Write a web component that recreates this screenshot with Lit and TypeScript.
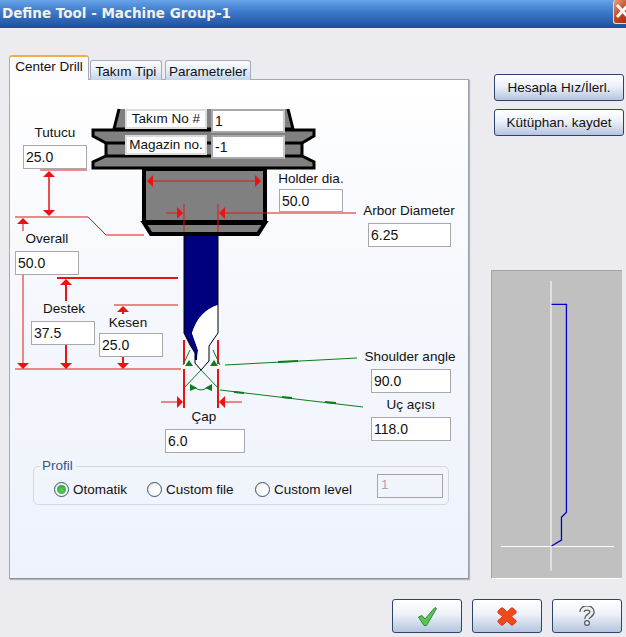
import { LitElement, html, svg, css } from 'lit'
import { customElement } from 'lit/decorators.js'

// all coordinates below are in window pixels, the canvas starts at 10,80
const OX = 10
const OY = 80

const FIELDS: [number, number, number, number, string][] = [
  [23, 145, 64, 24, '25.0'],
  [279, 189, 64, 23, '50.0'],
  [368, 223, 83, 24, '6.25'],
  [15, 251, 64, 24, '50.0'],
  [31, 321, 64, 24, '37.5'],
  [99, 333, 64, 24, '25.0'],
  [165, 429, 80, 24, '6.0'],
  [371, 369, 80, 24, '90.0'],
  [371, 417, 80, 24, '118.0'],
]

const LABELS: [string, number, number][] = [
  ['Tutucu', 55, 133],
  ['Holder dia.', 311, 179],
  ['Arbor Diameter', 409, 211],
  ['Overall', 47, 239],
  ['Destek', 64, 309],
  ['Kesen', 128, 323],
  ['Çap', 204, 417],
  ['Shoulder angle', 410, 357],
  ['Uç açısı', 411, 405],
]

const RED_LINES: [string, number][] = [
  ['40,170 87,170', 1],
  ['49,172 49,214', 1.5],
  ['15,217 88,217 106,235 144,235', 1],
  ['23,220 23,231', 1],
  ['23,275 23,366', 1],
  ['15,369 181,369', 1],
  ['57,278 178,278', 2],
  ['66,282 66,301', 2],
  ['66,345 66,366', 2],
  ['114,305 178,305', 1],
  ['123,308 123,314', 2],
  ['123,357 123,366', 2],
  ['149,181 259,181', 1],
  ['166,213 180,213', 1],
  ['222,213 356,213', 1],
  ['184,204 184,232', 1],
  ['218,204 218,232', 1],
  ['161,402 180,402', 1],
  ['222,402 242,402', 1],
]

function head(x: number, y: number, dir: 'u' | 'd' | 'l' | 'r', w = 6, l = 6) {
  const pts = {
    u: [x, y, x - w, y + l, x + w, y + l],
    d: [x, y, x - w, y - l, x + w, y - l],
    l: [x, y, x + l, y - w, x + l, y + w],
    r: [x, y, x - l, y - w, x - l, y + w],
  }[dir]
  return svg`<polygon points=${pts.join(' ')} fill="#ee1111" />`
}

@customElement('app-root')
export class AppRoot extends LitElement {
  static styles = css`
    :host {
      display: flex;
      flex-direction: column;
      width: 626px;
      height: 637px;
      overflow: hidden;
      background: #ecebf0;
      font-family: 'Liberation Sans', Arial, sans-serif;
      font-size: 13.5px;
      color: #111;
    }

    .titlebar {
      display: flex;
      flex: none;
      height: 28px;
      background: linear-gradient(#66a3e6, #3f7ccc 40%, #1c4f9f);
    }

    .title {
      padding: 3px 0 0 2px;
      font-family: 'DejaVu Sans', sans-serif;
      font-weight: bold;
      font-size: 13.5px;
      line-height: 20px;
      color: #f2f2ea;
    }

    .close {
      flex: none;
      width: 13px;
      height: 24px;
      margin-left: auto;
      overflow: hidden;
      background: linear-gradient(135deg, #e8a080, #c8461f 55%, #a83010);
      border-radius: 3px 0 0 3px;
      border: solid #e8d8d0;
      border-width: 0 0 1px 1px;
      box-sizing: border-box;
    }

    .close svg {
      display: block;
    }

    .main {
      display: flex;
      flex: none;
      height: 551px;
      padding-top: 28px;
      box-sizing: border-box;
    }

    .left {
      flex: none;
      width: 460px;
      margin-left: 9px;
    }

    .tabs {
      display: flex;
      align-items: flex-end;
      height: 24px;
      margin-bottom: -1px;
    }

    .tab {
      box-sizing: border-box;
      height: 20px;
      margin-right: 3px;
      padding-top: 3px;
      line-height: 15px;
      text-align: center;
      white-space: nowrap;
      color: #111;
      border: 1px solid #a6adba;
      border-bottom: none;
      border-radius: 3px 3px 0 0;
      background: linear-gradient(#fbfcfe, #e6edf7 50%, #c3d4ec);
    }

    .tab.active {
      position: relative;
      height: 25px;
      margin-right: 1px;
      padding-top: 2px;
      background: #fcfcfe;
      border-top: 2px solid #f0ad4a;
      border-bottom: none;
    }

    .panel {
      box-sizing: border-box;
      height: 500px;
      border: 1px solid #a3a9b6;
      border-right-color: #9a9ea8;
      border-bottom-color: #8e929c;
      background: linear-gradient(#ffffff, #f6f8fd 40%, #eef2fb);
      box-shadow: 1px 1px 1px #b4b6bd;
    }

    .canvas {
      position: relative;
      height: 386px;
    }

    .canvas svg {
      position: absolute;
      inset: 0;
    }

    .field {
      position: absolute;
      box-sizing: border-box;
      margin: 0;
      padding: 0 0 0 2px;
      border: 1px solid #a8a8a8;
      background: #fff;
      font: 14px 'Liberation Sans', Arial, sans-serif;
      color: #111;
      outline: none;
    }

    .field.plate {
      border: 2px solid #a8a8a8;
      border-right-color: #c8c8c8;
    }

    .label {
      position: absolute;
      width: 120px;
      line-height: 16px;
      text-align: center;
      white-space: nowrap;
    }

    .tag {
      position: absolute;
      box-sizing: border-box;
      height: 20px;
      border: 2px solid #dcdcdc;
      background: #fff;
      line-height: 16px;
      text-align: center;
      white-space: nowrap;
    }

    .group {
      position: relative;
      display: grid;
      grid-template-columns: 93px 108px 122px 66px;
      align-items: center;
      box-sizing: border-box;
      height: 39px;
      margin: 0 19px 0 23px;
      padding-left: 20px;
      border: 1px solid #d5d8e0;
      border-radius: 5px;
    }

    .legend {
      position: absolute;
      top: -9px;
      left: 6px;
      padding: 0 3px 0 2px;
      background: #f2f5fc;
      line-height: 16px;
      color: #2f5590;
    }

    .radio {
      display: flex;
      align-items: center;
      gap: 4px;
      margin-top: 7px;
      white-space: nowrap;
    }

    .dot {
      box-sizing: border-box;
      display: flex;
      align-items: center;
      justify-content: center;
      flex: none;
      width: 15px;
      height: 15px;
      border: 1px solid #32527c;
      border-radius: 50%;
      background: radial-gradient(circle at 60% 60%, #fff 30%, #f2ead8 80%);
    }

    .dot i {
      display: block;
      width: 9px;
      height: 9px;
      border-radius: 50%;
      background: radial-gradient(circle at 50% 60%, #5fd05f, #1f9a2f);
    }

    .off {
      box-sizing: border-box;
      width: 66px;
      height: 24px;
      padding: 0 0 3px 3px;
      border: 1px solid #a4a4a4;
      color: #a8a8a8;
      line-height: 19px;
    }

    .right {
      display: flex;
      flex-direction: column;
      flex: none;
      width: 133px;
      margin-left: 22px;
    }

    .btn {
      box-sizing: border-box;
      display: flex;
      align-items: center;
      justify-content: center;
      padding: 0;
      border: 1px solid #2d4468;
      border-radius: 3px;
      background: linear-gradient(#ffffff, #edf1f8 45%, #b4c5df);
      font: 13.5px 'Liberation Sans', Arial, sans-serif;
      color: #111;
    }

    .side {
      width: 130px;
      height: 27px;
      margin: 18px 0 0 3px;
    }

    .side + .side {
      margin-top: 8px;
    }

    .preview {
      display: block;
      box-sizing: border-box;
      width: 131px;
      height: 309px;
      margin-top: auto;
      background: #c0c0c0;
      border: solid #a4a4a8;
      border-width: 1px 0 0 1px;
      border-bottom: 1px solid #fff;
    }

    .footer {
      display: flex;
      justify-content: flex-end;
      gap: 10px;
      margin-top: 20px;
      padding-right: 4px;
    }

    .foot {
      width: 70px;
      height: 34px;
    }
  `

  renderHolder() {
    return svg`
      <g stroke="#000" stroke-linejoin="miter">
        <path d="M119 109 L114 129 H293 L288 109" fill="#808080" stroke-width="3" />
        <path d="M106 141 H302 V158 H106 Z" fill="#808080" stroke-width="3" />
        <path d="M93 130 H314 V136 L302 143 H106 L93 136 Z" fill="#808080" stroke-width="3" />
        <path d="M106 156 H302 L314 162 V168 H93 V162 Z" fill="#808080" stroke-width="3" />
        <path d="M144 169 H265 V222 H144 Z" fill="#808080" stroke-width="4" />
        <path d="M144 223 L151 234 H258 L265 223 Z" fill="#808080" stroke-width="4" />
      </g>
      <path
        d="M184 236 H218 V305 C205 309 197 318 192 333 L198 350 L197 360 L195 360 V353 L190 345 L184 333 Z"
        fill="#00007f"
      />
      <path
        d="M218 305 V333 L210 346 L209 361 L201 370 L195 363 V360 H197 L198 350 L192 333 C197 318 205 309 218 305 Z"
        fill="#fff"
      />
      <path
        d="M184 236 V333 L190 345 L195 353 V363 L201 370 L209 361 V346 L218 333 V236"
        fill="none"
        stroke="#000"
        stroke-width="1"
      />
    `
  }

  renderDims() {
    return svg`
      ${RED_LINES.map(
        ([points, w]) => svg`<polyline points=${points} fill="none" stroke="#e61414" stroke-width=${w} />`
      )}
      <path d="M184 340 V364 M184 369 V408 M218 340 V364 M218 369 V408" stroke="#e61414" stroke-width="2" />
      ${head(49, 171, 'u', 6, 6)}
      ${head(49, 216, 'd', 6, 6)}
      ${head(23, 218, 'u', 6, 6)}
      ${head(23, 369, 'd', 6, 6)}
      ${head(66, 279, 'u', 6, 6)}
      ${head(66, 369, 'd', 6, 6)}
      ${head(123, 306, 'u', 6, 6)}
      ${head(123, 369, 'd', 6, 6)}
      ${head(147, 181, 'l', 6, 6)}
      ${head(261, 181, 'r', 6, 6)}
      ${head(183, 213, 'r', 6, 6)}
      ${head(219, 213, 'l', 6, 6)}
      ${head(183, 402, 'r', 6, 6)}
      ${head(219, 402, 'l', 6, 6)}
    `
  }

  renderAngles() {
    return svg`
      <g fill="none" stroke="#0f7a1f" stroke-width="1">
        <path d="M225 365 L357 358" />
        <path d="M220 390 L363 407" />
        <path d="M183 365 L190 350 M213 350 L220 365" />
        <path d="M183 389 L201 370 L219 389" />
        <path d="M194 387 Q201 393 208 387" />
      </g>
      <path d="M278 362 L298 361 M234 392 L244 393 M282 397 L292 398 M325 402 L336 403" stroke="#0f7a1f" stroke-width="2" />
      <g fill="#0f7a1f">
        <polygon points="185,366 189,360 193,366" />
        <polygon points="210,366 214,360 218,366" />
        <polygon points="190,384 197,388 190,391" />
        <polygon points="212,384 205,388 212,391" />
      </g>
    `
  }

  render() {
    return html`
      <div class="titlebar">
        <span class="title">Define Tool - Machine Group-1</span>
        <div class="close">
          <svg width="13" height="24" viewBox="0 0 13 24">
            <path d="M3 5 L14 17 M14 5 L3 17" stroke="#fff" stroke-width="3" fill="none" />
          </svg>
        </div>
      </div>

      <div class="main">
        <div class="left">
          <div class="tabs">
            <div class="tab active" style="width:80px">Center Drill</div>
            <div class="tab" style="width:72px">Takım Tipi</div>
            <div class="tab" style="width:86px">Parametreler</div>
          </div>
          <div class="panel">
            <div class="canvas">
              <svg width="458" height="386" viewBox="${OX} ${OY} 458 386">
                ${this.renderHolder()} ${this.renderDims()} ${this.renderAngles()}
              </svg>
              <div class="tag" style="left:${125 - OX}px;top:${109 - OY}px;width:82px">Takım No #</div>
              <input class="field plate" readonly value="1" style="left:${211 - OX}px;top:${109 - OY}px;width:74px;height:24px" />
              <div class="tag" style="left:${125 - OX}px;top:${135 - OY}px;width:82px">Magazin no.</div>
              <input class="field plate" readonly value="-1" style="left:${211 - OX}px;top:${135 - OY}px;width:74px;height:24px" />
              ${LABELS.map(
                ([text, cx, cy]) =>
                  html`<div class="label" style="left:${cx - 60 - OX}px;top:${cy - 8 - OY}px">${text}</div>`
              )}
              ${FIELDS.map(
                ([x, y, w, h, value]) =>
                  html`<input class="field" readonly .value=${value} style="left:${x - OX}px;top:${y - OY}px;width:${w}px;height:${h}px" />`
              )}
            </div>
            <div class="group">
              <span class="legend">Profil</span>
              <div class="radio"><span class="dot"><i></i></span>Otomatik</div>
              <div class="radio"><span class="dot"></span>Custom file</div>
              <div class="radio"><span class="dot"></span>Custom level</div>
              <div class="off">1</div>
            </div>
          </div>
        </div>

        <div class="right">
          <button class="btn side">Hesapla Hız/İlerl.</button>
          <button class="btn side">Kütüphan. kaydet</button>
          <svg class="preview" width="131" height="309" viewBox="491 270 131 309">
            <path d="M550.5 280 V572 M500 547.5 H614" stroke="#fff" fill="none" />
            <polyline points="551,303.5 566,303.5 566,513 561,518 561,541 551,547" fill="none" stroke="#0000c8" stroke-width="1.3" />
          </svg>
        </div>
      </div>

      <div class="footer">
        <button class="btn foot">
          <svg width="19" height="19" viewBox="0 0 19 19">
            <path d="M0.5 10 L4 8.5 L7 12 L17 0.5 L18.5 1.5 L8.5 18.5 L6 18.5 Z" fill="#5cc454" stroke="#2b8a36" stroke-width="1" />
          </svg>
        </button>
        <button class="btn foot">
          <svg width="20" height="19" viewBox="0 0 20 19">
            <path
              d="M1 4 L4 1 Q5 0.5 6 1 L10 5 L14 1 Q15 0.5 16 1 L19 4 Q19.5 5 19 6 L14.5 9.5 L19 13.5 Q19.5 14.5 19 15 L16 18 Q15 18.5 14 18 L10 14 L6 18 Q5 18.5 4 18 L1 15 Q0.5 14.5 1 13.5 L5.5 9.5 L1 6 Q0.5 5 1 4 Z"
              fill="#ee4a1c"
              stroke="#d8350f"
              stroke-width="0.8"
            />
          </svg>
        </button>
        <button class="btn foot">
          <svg width="16" height="20" viewBox="0 0 16 20">
            <path d="M3 6 C3 0.5 13 0.5 13 6 C13 9.5 8 9.5 8 13" fill="none" stroke="#55585c" stroke-width="5.5" />
            <path d="M3 6 C3 0.5 13 0.5 13 6 C13 9.5 8 9.5 8 13" fill="none" stroke="#eeeeee" stroke-width="3" />
            <circle cx="8" cy="17" r="2.4" fill="#eeeeee" stroke="#55585c" stroke-width="1.2" />
          </svg>
        </button>
      </div>
    `
  }
}
